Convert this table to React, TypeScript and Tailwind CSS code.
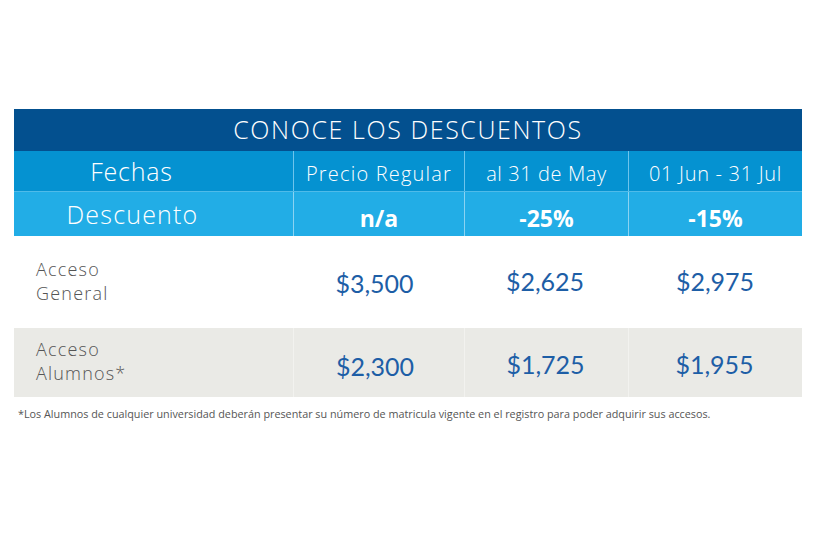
export default function App() {
  const head = "font-['Open_Sans',sans-serif]";
  const price = "font-['Lato',sans-serif] text-[25px] text-[#1d5ea6]";
  const label = "font-['Open_Sans',sans-serif] font-light text-[18px] tracking-[1.2px] leading-[24px] text-[#555]";

  return (
    <div className="w-[821px] h-[547px] bg-white pt-[109px] pl-[14px]">
      <div className="w-[788px]">
        <div className={`h-[42px] bg-[#03508f] flex items-center justify-center text-white text-[25px] tracking-[1.6px] font-light ${head}`}>
          CONOCE LOS DESCUENTOS
        </div>

        <div className={`grid grid-cols-[279px_171px_164px_174px] h-[41px] bg-[#0592d1] text-white border-b border-[#4fbbe9] ${head}`}>
          <div className="flex items-center justify-center pr-[44px] pt-[2px] text-[25px] tracking-[0.8px] font-light">Fechas</div>
          <div className="flex items-center justify-center pt-[6px] text-[20px] tracking-[1.2px] font-light border-l border-[#6ec4ec]">Precio Regular</div>
          <div className="flex items-center justify-center pt-[6px] text-[20px] tracking-[0.6px] font-light border-l border-[#6ec4ec]">al 31 de May</div>
          <div className="flex items-center justify-center pt-[6px] text-[20px] tracking-[0.7px] font-light border-l border-[#6ec4ec]">01 Jun - 31 Jul</div>
        </div>

        <div className={`grid grid-cols-[279px_171px_164px_174px] h-[44px] bg-[#22ade6] text-white ${head}`}>
          <div className="flex items-center justify-center pr-[42px] pt-[2px] text-[25px] tracking-[1.2px] font-light">Descuento</div>
          <div className="flex items-center justify-center pt-[8px] text-[23px] font-bold border-l border-[#8bd3f2]">n/a</div>
          <div className="flex items-center justify-center pt-[8px] text-[23px] font-bold border-l border-[#8bd3f2]">-25%</div>
          <div className="flex items-center justify-center pt-[8px] text-[23px] font-bold border-l border-[#8bd3f2]">-15%</div>
        </div>

        <div className="grid grid-cols-[279px_171px_164px_174px] h-[92px]">
          <div className={`flex flex-col justify-center pl-[22px] pb-[2px] ${label}`}>
            <span>Acceso</span>
            <span>General</span>
          </div>
          <div className={`flex items-center justify-center pt-[4px] pr-[8px] ${price}`}>$3,500</div>
          <div className={`flex items-center justify-center pr-[2px] ${price}`}>$2,625</div>
          <div className={`flex items-center justify-center ${price}`}>$2,975</div>
        </div>

        <div className="grid grid-cols-[279px_171px_164px_172px] h-[69px] bg-[#eaeae6]">
          <div className={`flex flex-col justify-center pl-[22px] pb-[4px] ${label}`}>
            <span>Acceso</span>
            <span>Alumnos*</span>
          </div>
          <div className={`flex items-center justify-center pt-[8px] pr-[8px] border-l border-[#f2f2ef] ${price}`}>$2,300</div>
          <div className={`flex items-center justify-center pt-[4px] pr-[2px] border-l border-[#f2f2ef] ${price}`}>$1,725</div>
          <div className={`flex items-center justify-center pt-[4px] border-l border-[#f2f2ef] ${price}`}>$1,955</div>
        </div>

        <p className="mt-[9px] pl-[4px] font-['Open_Sans',sans-serif] text-[10.8px] text-[#555]">
          *Los Alumnos de cualquier universidad deberán presentar su número de matricula vigente en el registro para poder adquirir sus accesos.
        </p>
      </div>
    </div>
  );
}
